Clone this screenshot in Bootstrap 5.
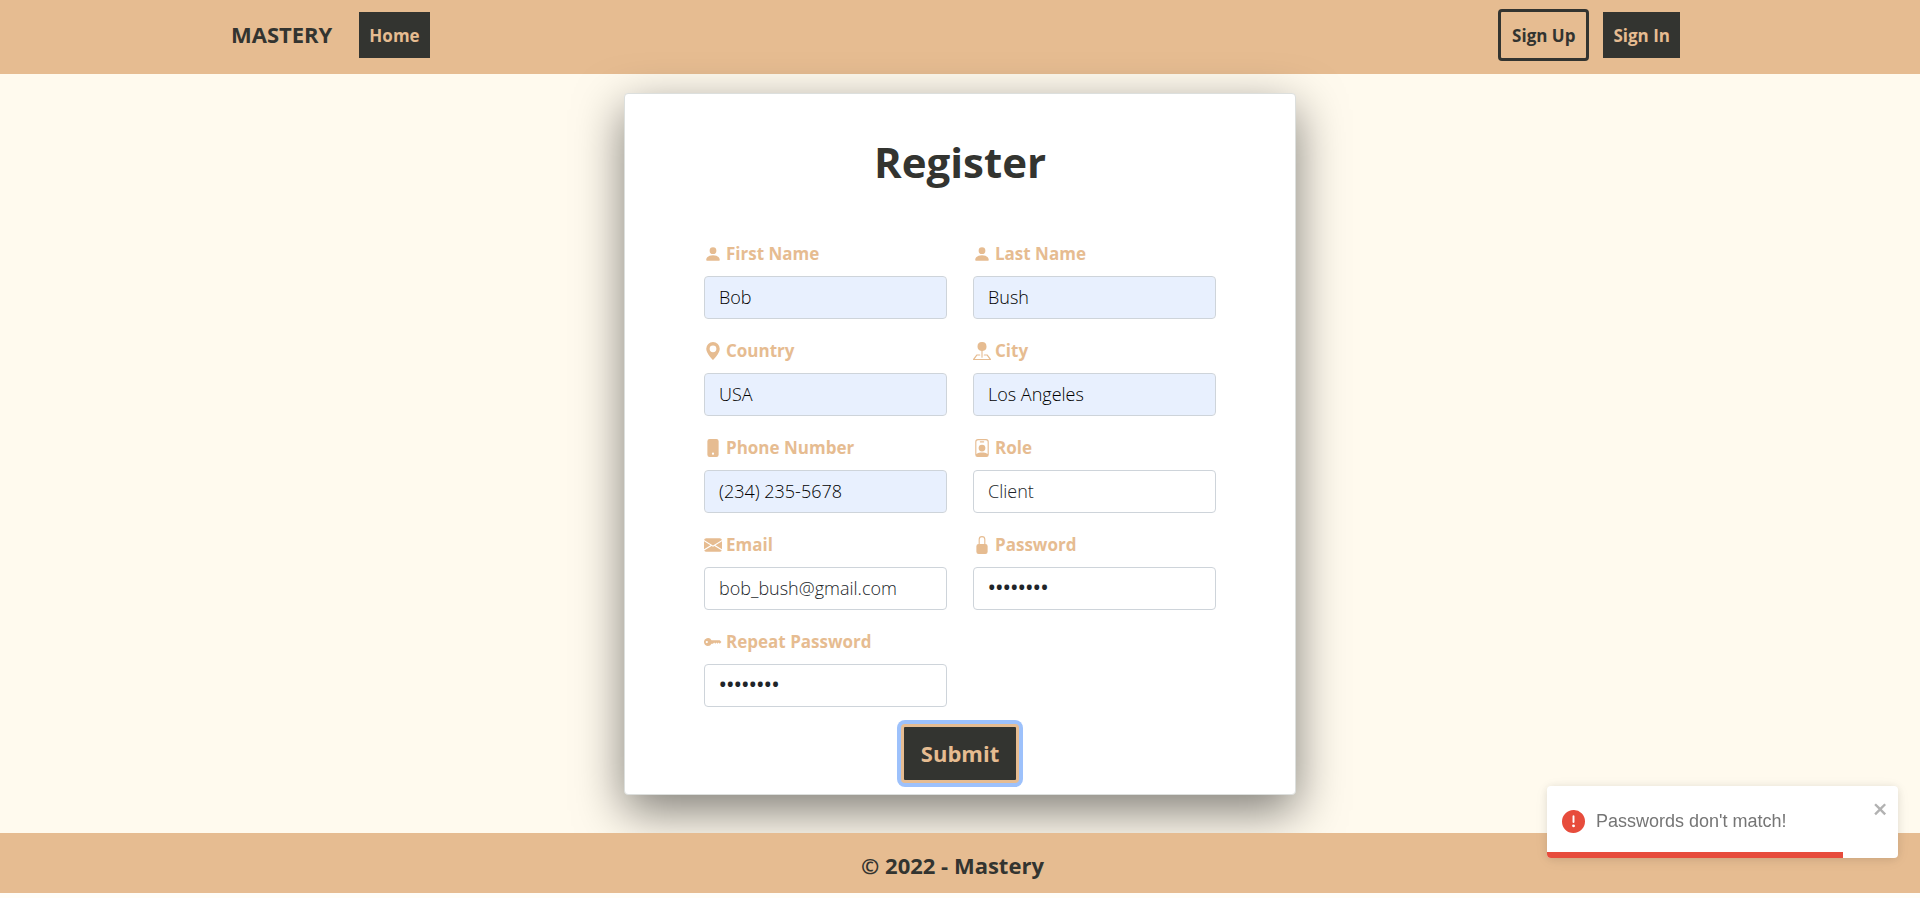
<!DOCTYPE html>
<html lang="en">
<head>
<meta charset="utf-8">
<meta name="viewport" content="width=device-width, initial-scale=1">
<title>Mastery - Register</title>
<link href="https://cdn.jsdelivr.net/npm/bootstrap@5.3.0/dist/css/bootstrap.min.css" rel="stylesheet">
<style>
  :root { --sand: #e6bc91; --coal: #333430; --cream: #fffaee; }
  body { font-family: "Open Sans", "Noto Sans", sans-serif; background: #fffef9; color: var(--coal); }
  .topbar, .bottombar { background: var(--sand); }
  .topbar { min-height: 74px; padding: 9px 240px 13px 231px; }
  .brand { font-size: 22px; line-height: 32px; padding-bottom: 2px; font-weight: 700; color: var(--coal); margin-right: 27px; }
  .navbtn { font-size: 17px; line-height: 30px; font-weight: 700; padding: 9px 10px 7px; color: var(--sand); background: var(--coal); }
  .navbtn-outline { color: var(--coal); background: transparent; border: 3px solid var(--coal); border-radius: 4px; padding-left: 11px; padding-right: 11px; margin-right: 14px; }
  main { background: var(--cream); padding: 19px 0 38px; }
  .register-card { width: 35%; min-width: 480px; border: 1px solid #dcdfdd; border-radius: 4px; padding: 35px 79px 11px; box-shadow: 0 16px 48px rgba(0,0,0,.5); background: #fff; }
  .register-title { font-size: 42px; line-height: 66px; font-weight: 700; margin-bottom: 46px; }
  .field-label { font-size: 17px; line-height: 26px; font-weight: 700; color: var(--sand); margin-bottom: 9px; gap: 4px; }
  .field-label svg { width: 18px; height: 18px; fill: currentColor; }
  .field-grid { --bs-gutter-x: 26px; row-gap: 19px; }
  .field-input { height: 43px; font-size: 18px; padding: 5px 14px 7px; border: 1px solid #ced4da; border-radius: 4px; font-weight: 300; color: #212529; }
  .field-input.filled { background-color: #e8f0fe; color: #000; }
  .field-input[type="password"] { font-size: 20px; font-weight: 600; }
  .submit-btn { font-size: 22px; line-height: 33px; font-weight: 700; color: var(--sand); background: var(--coal); border: 3px solid var(--sand); border-radius: 4px; padding: 10px 17px; box-shadow: 0 0 0 4px #9dc1fb; }
  .submit-row { margin-top: 17px; }
  .bottombar { height: 60px; font-size: 22px; font-weight: 700; padding: 4px 15px 0 0; }
  .notice { position: fixed; right: 22px; bottom: 40px; width: 351px; height: 72px; background: #fff; border-radius: 4px; box-shadow: 0 1px 10px rgba(0,0,0,.1), 0 2px 15px rgba(0,0,0,.05); font: 18px/24px "Liberation Sans", Arial, sans-serif; color: #757575; padding: 0 15px 2px; gap: 11px; overflow: hidden; }
  .notice-close { top: 13px; right: 9px; line-height: 1; }
  .notice-progress { height: 6px; background: #e74c3c; }
</style>
</head>
<body>
<nav class="topbar d-flex align-items-center justify-content-between">
  <div class="d-flex align-items-center">
    <a href="#" class="brand text-decoration-none">MASTERY</a>
    <a href="#" class="navbtn text-decoration-none">Home</a>
  </div>
  <div class="d-flex align-items-center">
    <a href="#" class="navbtn navbtn-outline text-decoration-none">Sign Up</a>
    <a href="#" class="navbtn text-decoration-none">Sign In</a>
  </div>
</nav>
<main>
  <form class="register-card mx-auto">
    <h1 class="register-title text-center">Register</h1>
    <div class="row field-grid">
      <div class="col-6">
        <label for="first" class="field-label d-flex align-items-center"><svg viewBox="0 0 16 16"><path d="M3 14s-1 0-1-1 1-4 6-4 6 3 6 4-1 1-1 1H3Zm5-6a3 3 0 1 0 0-6 3 3 0 0 0 0 6Z"/></svg>First Name</label>
        <input id="first" type="text" class="form-control field-input filled" value="Bob">
      </div>
      <div class="col-6">
        <label for="last" class="field-label d-flex align-items-center"><svg viewBox="0 0 16 16"><path d="M3 14s-1 0-1-1 1-4 6-4 6 3 6 4-1 1-1 1H3Zm5-6a3 3 0 1 0 0-6 3 3 0 0 0 0 6Z"/></svg>Last Name</label>
        <input id="last" type="text" class="form-control field-input filled" value="Bush">
      </div>
      <div class="col-6">
        <label for="country" class="field-label d-flex align-items-center"><svg viewBox="0 0 16 16"><path d="M8 16s6-5.686 6-10A6 6 0 0 0 2 6c0 4.314 6 10 6 10zm0-7a3 3 0 1 1 0-6 3 3 0 0 1 0 6z"/></svg>Country</label>
        <input id="country" type="text" class="form-control field-input filled" value="USA">
      </div>
      <div class="col-6">
        <label for="city" class="field-label d-flex align-items-center"><svg viewBox="0 0 16 16"><path d="M3.1 11.2a.5.5 0 0 1 .4-.2H6a.5.5 0 0 1 0 1H3.75L1.5 15h13l-2.25-3H10a.5.5 0 0 1 0-1h2.5a.5.5 0 0 1 .4.2l3 4a.5.5 0 0 1-.4.8H.5a.5.5 0 0 1-.4-.8l3-4z"/><path d="M4 4a4 4 0 1 1 4.5 3.969V13.500a.5.5 0 0 1-1 0V7.970A4 4 0 0 1 4 4Z"/></svg>City</label>
        <input id="city" type="text" class="form-control field-input filled" value="Los Angeles">
      </div>
      <div class="col-6">
        <label for="phone" class="field-label d-flex align-items-center"><svg viewBox="0 0 16 16"><path d="M3 2a2 2 0 0 1 2-2h6a2 2 0 0 1 2 2v12a2 2 0 0 1-2 2H5a2 2 0 0 1-2-2V2zm6 11a1 1 0 1 0-2 0 1 1 0 0 0 2 0z"/></svg>Phone Number</label>
        <input id="phone" type="tel" class="form-control field-input filled" value="(234) 235-5678">
      </div>
      <div class="col-6">
        <label for="role" class="field-label d-flex align-items-center"><svg viewBox="0 0 16 16"><path d="M6.5 2a.5.5 0 0 0 0 1h3a.5.5 0 0 0 0-1h-3zM11 8a3 3 0 1 1-6 0 3 3 0 0 1 6 0z"/><path d="M4.500 0A2.500 2.500 0 0 0 2 2.500V14a2 2 0 0 0 2 2h8a2 2 0 0 0 2-2V2.500A2.500 2.500 0 0 0 11.500 0h-7zM3 2.500A1.500 1.500 0 0 1 4.500 1h7A1.500 1.500 0 0 1 13 2.500v10.795a4.200 4.200 0 0 0-.776-.492C11.392 12.387 10.063 12 8 12s-3.392.387-4.224.803a4.200 4.200 0 0 0-.776.492V2.500z"/></svg>Role</label>
        <input id="role" type="text" class="form-control field-input" value="Client">
      </div>
      <div class="col-6">
        <label for="email" class="field-label d-flex align-items-center"><svg viewBox="0 0 16 16"><path d="M.05 3.555A2 2 0 0 1 2 2h12a2 2 0 0 1 1.950 1.555L8 8.414.05 3.555ZM0 4.697v7.104l5.803-3.558L0 4.697ZM6.761 8.830l-6.570 4.027A2 2 0 0 0 2 14h12a2 2 0 0 0 1.808-1.144l-6.570-4.027L8 9.586l-1.239-.757Zm3.436-.586L16 11.801V4.697l-5.803 3.546Z"/></svg>Email</label>
        <input id="email" type="email" class="form-control field-input" value="bob_bush@gmail.com">
      </div>
      <div class="col-6">
        <label for="pass" class="field-label d-flex align-items-center"><svg viewBox="0 0 16 16"><path d="M8 1a2 2 0 0 1 2 2v4H6V3a2 2 0 0 1 2-2zm3 6V3a3 3 0 0 0-6 0v4a2 2 0 0 0-2 2v5a2 2 0 0 0 2 2h6a2 2 0 0 0 2-2V9a2 2 0 0 0-2-2z"/></svg>Password</label>
        <input id="pass" type="password" class="form-control field-input" value="12345678">
      </div>
      <div class="col-6">
        <label for="repeat" class="field-label d-flex align-items-center"><svg viewBox="0 0 16 16"><path d="M3.500 11.500a3.500 3.500 0 1 1 3.163-5H14L15.500 8 14 9.500l-1-1-1 1-1-1-1 1-1-1-1 1H6.663a3.500 3.500 0 0 1-3.163 2zM2.500 9a1 1 0 1 0 0-2 1 1 0 0 0 0 2z"/></svg>Repeat Password</label>
        <input id="repeat" type="password" class="form-control field-input" value="87654321">
      </div>
    </div>
    <div class="submit-row text-center"><button type="button" class="submit-btn">Submit</button></div>
  </form>
</main>
<footer class="bottombar d-flex align-items-center justify-content-center">© 2022 - Mastery</footer>
<div class="notice d-flex align-items-center" role="alert">
  <svg width="23" height="23" viewBox="0 0 24 24" fill="#e74c3c"><path d="M11.983 0a12.206 12.206 0 0 0-8.510 3.653A11.800 11.800 0 0 0 0 12.207 11.779 11.779 0 0 0 11.800 24h.214A12.111 12.111 0 0 0 24 11.791 11.766 11.766 0 0 0 11.983 0zM10.500 16.542a1.476 1.476 0 0 1 1.449-1.530h.027a1.527 1.527 0 0 1 1.523 1.470 1.475 1.475 0 0 1-1.449 1.530h-.027a1.529 1.529 0 0 1-1.523-1.470zM11 12.500v-6a1 1 0 0 1 2 0v6a1 1 0 0 1-2 0z"/></svg>
  <span>Passwords don't match!</span>
  <button type="button" class="notice-close position-absolute border-0 bg-transparent p-0" aria-label="close"><svg width="16" height="18" viewBox="0 0 14 16" fill="#b2b2b2"><path fill-rule="evenodd" d="M7.710 8.230l3.750 3.750-1.480 1.480-3.750-3.750-3.750 3.750L1 11.980l3.750-3.750L1 4.480 2.480 3l3.750 3.750L9.980 3l1.480 1.480-3.750 3.750z"/></svg></button>
  <div class="notice-progress position-absolute start-0 bottom-0" style="width: 84.3%"></div>
</div>
<script src="https://cdn.jsdelivr.net/npm/bootstrap@5.3.0/dist/js/bootstrap.bundle.min.js"></script>
</body>
</html>
